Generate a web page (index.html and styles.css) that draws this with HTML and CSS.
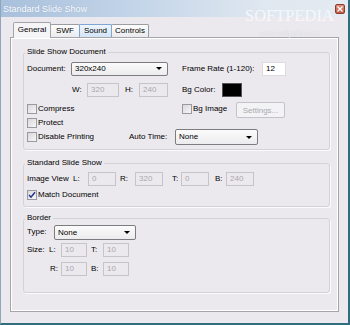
FILE: index.html
```html
<!DOCTYPE html>
<html lang="en">
<head>
    <meta charset="UTF-8">
    <title>Standard Slide Show</title>
    <link rel="stylesheet" href="styles.css">
</head>
<body>
    <div class="window">
        <div class="watermark">
            <div class="wm-big">SOFTPEDIA</div>
            <div class="wm-small">www.softpedia.com</div>
        </div>
        <div class="titlebar">
            <span class="title">Standard Slide Show</span>
            <span class="close">
                <svg width="6" height="6" viewBox="0 0 6 6"><path d="M0.5 0.5 L5.5 5.5 M5.5 0.5 L0.5 5.5" stroke="#fff" stroke-width="1.4"/></svg>
            </span>
        </div>

        <div class="client">
            <div class="tabs">
                <div class="tab active">General</div>
                <div class="tab t-swf">SWF</div>
                <div class="tab hot t-sound">Sound</div>
                <div class="tab t-ctrl">Controls</div>
            </div>

            <div class="panel">
                <!-- document settings -->
                <fieldset class="group g-doc">
                    <legend>Slide Show Document</legend>
                    <div class="row">
                        <span class="lbl w44">Document:</span>
                        <div class="combo w97">320x240</div>
                        <span class="lbl w80 ml14">Frame Rate (1-120):</span>
                        <div class="field live w24">12</div>
                    </div>
                    <div class="row mt7 pl45">
                        <span class="lbl w15">W:</span>
                        <div class="field w32">320</div>
                        <span class="lbl w14 ml6">H:</span>
                        <div class="field w29">240</div>
                        <span class="lbl w40 ml14">Bg Color:</span>
                        <div class="swatch"></div>
                    </div>
                    <div class="row mt5">
                        <div class="w155"><span class="check"></span><span class="lbl">Compress</span></div>
                        <div class="w54"><span class="check"></span><span class="lbl">Bg Image</span></div>
                        <div class="button">Settings...</div>
                    </div>
                    <div class="row">
                        <div class="w155"><span class="check"></span><span class="lbl">Protect</span></div>
                    </div>
                    <div class="row">
                        <div class="w102"><span class="check"></span><span class="lbl">Disable Printing</span></div>
                        <span class="lbl w46">Auto Time:</span>
                        <div class="combo w83 tall">None</div>
                    </div>
                </fieldset>

                <!-- standard slide show -->
                <fieldset class="group g-std">
                    <legend>Standard Slide Show</legend>
                    <div class="row">
                        <span class="lbl w46">Image View</span>
                        <span class="lbl w15">L:</span>
                        <div class="field w28">0</div>
                        <span class="lbl w15 ml4">R:</span>
                        <div class="field w28">320</div>
                        <span class="lbl w9 ml9">T:</span>
                        <div class="field w28">0</div>
                        <span class="lbl w11 ml6">B:</span>
                        <div class="field w28">240</div>
                    </div>
                    <div class="row mt2">
                        <span class="check checked">
                            <svg width="8" height="8" viewBox="0 0 8 8"><path d="M1 4 L3 6.2 L7 1.2" fill="none" stroke="#21318f" stroke-width="1.5"/></svg>
                        </span>
                        <span class="lbl">Match Document</span>
                    </div>
                </fieldset>

                <!-- border -->
                <fieldset class="group g-border">
                    <legend>Border</legend>
                    <div class="row">
                        <span class="lbl w27">Type:</span>
                        <div class="combo w82 mid">None</div>
                    </div>
                    <div class="row mt4">
                        <span class="lbl w22">Size:</span>
                        <span class="lbl w12">L:</span>
                        <div class="field w26">10</div>
                        <span class="lbl w12 ml4">T:</span>
                        <div class="field w26">10</div>
                    </div>
                    <div class="row mt5 pl23">
                        <span class="lbl w11">R:</span>
                        <div class="field w26">10</div>
                        <span class="lbl w12 ml4">B:</span>
                        <div class="field w26">10</div>
                    </div>
                </fieldset>
            </div>
        </div>
    </div>
</body>
</html>
```

FILE: styles.css
```css
html, body {
    margin: 0;
    padding: 0;
    background: #ece9ee;
}
body {
    font-family: "Liberation Sans", Arial, sans-serif;
    font-size: 8px;
    color: #000;
}
.window {
    position: relative;
    width: 350px;
    height: 325px;
    box-sizing: border-box;
    background: #ece9ee;
    border-left: 1px solid #8ea5bb;
    border-right: 2px solid #2f6d7f;
    border-bottom: 2px solid #2f6d7f;
}
.titlebar {
    height: 17px;
    display: flex;
    align-items: center;
    justify-content: space-between;
    padding: 0 3px 0 2px;
    background: linear-gradient(to right, #a8c0dc, #c8d8ea 45%, #dfe7f0 75%, #e4ebf2);
}
.title {
    font-size: 9px;
    color: #fff;
    text-shadow: 0 0 1px #8aa3bf;
}
.close {
    position: relative;
    z-index: 5;
    width: 8px;
    height: 8px;
    display: flex;
    align-items: center;
    justify-content: center;
    border: 1px solid #8d3a2f;
    border-radius: 2px;
    background: linear-gradient(#e08a76, #c35842);
}
.watermark {
    position: absolute;
    z-index: 1;
    left: 244px;
    top: 7px;
    font-family: "Liberation Serif", serif;
    text-align: center;
    pointer-events: none;
    opacity: 0.7;
}
.wm-big {
    font-size: 16.5px;
    color: #fff;
    line-height: 18px;
}
.wm-small {
    font-size: 7.5px;
    color: #fafafc;
    text-shadow: 0 0 1px #a9a9b4;
    margin-top: 4px;
}

.client {
    padding: 5px 9px 0 9px;
}
.tabs {
    display: flex;
    align-items: flex-end;
    height: 15px;
    padding-left: 3px;
}
.tab {
    box-sizing: border-box;
    height: 13px;
    line-height: 12px;
    text-align: center;
    border: 1px solid #9a9ea3;
    border-bottom: none;
    border-radius: 2px 2px 0 0;
    background: linear-gradient(#fdfdfd, #ebeaee);
    margin-left: -1px;
}
.tab.active {
    position: relative;
    z-index: 1;
    width: 38px;
    height: 16px;
    line-height: 14px;
    margin-left: 0;
    margin-bottom: -1px;
    background: #f5f4f7;
    border-color: #a3a3a8;
}
.t-swf { width: 30px; }
.t-sound { width: 33px; }
.t-ctrl { width: 38px; }
.tab.hot {
    position: relative;
    border-color: #7ea6d3;
    background: linear-gradient(#eef5fc, #d3e4f6);
}

.panel {
    box-sizing: border-box;
    width: 329px;
    height: 275px;
    padding: 9px 8px 0 12px;
    border: 1px solid #a4a4a9;
    box-shadow: inset 1px 1px 0 #fff, inset -1px -1px 0 #fff;
    background: #ece9ee;
}
.group {
    box-sizing: border-box;
    width: 307px;
    margin: 0;
    padding: 5px 3px 5px 3px;
    border: 1px solid #d4d2d9;
    border-radius: 3px;
    box-shadow: 1px 1px 0 #fbfbfc;
}
.group legend {
    padding: 0 2px;
    margin-left: -2px;
    line-height: 10px;
    height: 10px;
}
.g-std {
    margin-top: 8px;
    padding-top: 4px;
    padding-bottom: 4px;
}
.g-border {
    margin-top: 6px;
    padding-top: 2px;
    padding-bottom: 16px;
}

.row {
    display: flex;
    align-items: center;
    height: 14px;
}
.row > div {
    display: flex;
    align-items: center;
}
.lbl {
    line-height: 14px;
    white-space: nowrap;
}
.field {
    box-sizing: border-box;
    height: 14px;
    line-height: 12px;
    padding-left: 3px;
    border: 1px solid #c6c4cb;
    background: #ece9ee;
    color: #a8a8ab;
}
.field.live {
    background: #fff;
    border-color: #dcdbe0;
    color: #000;
}
.combo {
    position: relative;
    box-sizing: border-box;
    height: 14px;
    line-height: 12px;
    padding-left: 3px;
    border: 1px solid #7d7d80;
    border-radius: 2px;
    background: linear-gradient(#fbfbfb, #ececee);
}
.combo::after {
    content: "";
    position: absolute;
    right: 5px;
    top: 4px;
    border-left: 3px solid transparent;
    border-right: 3px solid transparent;
    border-top: 3px solid #000;
}
.combo.tall {
    height: 16px;
    line-height: 14px;
}
.combo.tall::after { top: 6px; }
.combo.mid {
    height: 15px;
    line-height: 13px;
}
.combo.mid::after { top: 5px; }
.swatch {
    width: 20px;
    height: 14px;
    box-sizing: border-box;
    background: #000;
    border: 1px solid #555;
}
.check {
    box-sizing: border-box;
    width: 10px;
    height: 10px;
    margin-right: 1px;
    border: 1px solid #9a9a9e;
    background: linear-gradient(135deg, #d9d8dc, #f6f6f7);
    display: inline-flex;
    align-items: center;
    justify-content: center;
}
.button {
    box-sizing: border-box;
    width: 49px;
    height: 16px;
    margin-top: 2px;
    justify-content: center;
    border: 1px solid #c3c2c8;
    border-radius: 2px;
    background: #f3f2f5;
    color: #a9a9ad;
}

.w9 { width: 9px; }
.w11 { width: 11px; }
.w12 { width: 12px; }
.w14 { width: 14px; }
.w15 { width: 15px; }
.w22 { width: 22px; }
.w24 { width: 24px; }
.w26 { width: 26px; }
.w27 { width: 27px; }
.w28 { width: 28px; }
.w29 { width: 29px; }
.w32 { width: 32px; }
.w40 { width: 40px; }
.w44 { width: 44px; }
.w46 { width: 46px; }
.w54 { width: 54px; }
.w80 { width: 80px; }
.w82 { width: 82px; }
.w83 { width: 83px; }
.w97 { width: 97px; }
.w102 { width: 102px; }
.w155 { width: 155px; }
.ml4 { margin-left: 4px; }
.ml6 { margin-left: 6px; }
.ml9 { margin-left: 9px; }
.ml14 { margin-left: 14px; }
.mt2 { margin-top: 2px; }
.mt4 { margin-top: 4px; }
.mt5 { margin-top: 5px; }
.mt7 { margin-top: 7px; }
.pl23 { padding-left: 23px; }
.pl45 { padding-left: 45px; }
```
